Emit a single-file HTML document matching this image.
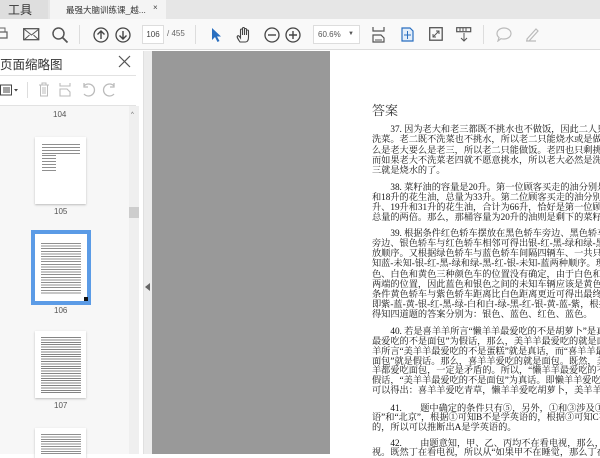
<!DOCTYPE html>
<html><head><meta charset="utf-8"><style>
*{margin:0;padding:0;box-sizing:border-box}
body{width:600px;height:454px;overflow:hidden;position:relative;background:#fff;font-family:"Liberation Sans","Noto Sans CJK SC",sans-serif}
.abs{position:absolute}
.tabbar{left:0;top:0;width:600px;height:19px;background:#e6e6e6}
.tb{left:0;top:19px;width:600px;height:31px;background:#f9f9f9;border-bottom:1px solid #dcdcdc}
.ln{position:absolute;left:372px;white-space:nowrap;font-family:"Liberation Serif","Noto Serif CJK SC",serif;font-size:9.2px;line-height:10px;color:#111}
svg{position:absolute}
</style></head><body>
<div class="abs tabbar"></div>
<div class="abs" style="left:0;top:0;width:48px;height:19px;background:#dedede"></div>
<div class="abs" style="left:8px;top:1px;font-size:12px;color:#333">工具</div>
<div class="abs" style="left:50px;top:0;width:116px;height:19px;background:#f4f4f4"></div>
<div class="abs" style="left:66px;top:4px;font-size:8.5px;color:#333">最强大脑训练课_越...</div>
<div class="abs" style="left:153px;top:3px;font-size:8px;color:#444">×</div>
<div class="abs tb"></div>
<svg style="left:0;top:27px" width="10" height="16"><rect x="-4" y="5" width="11" height="6" fill="none" stroke="#666" stroke-width="1.3"/><rect x="-2" y="1" width="7" height="4" fill="none" stroke="#666"/></svg>
<svg style="left:23px;top:28px" width="17" height="13"><rect x=".7" y=".7" width="15" height="11" fill="none" stroke="#555" stroke-width="1.3"/><path d="M1 1l7.5 6 7.5-6M1 12l5.5-5M16 12l-5.5-5" fill="none" stroke="#555"/></svg>
<svg style="left:51px;top:26px" width="18" height="18"><circle cx="7.5" cy="7.5" r="5.5" fill="none" stroke="#555" stroke-width="1.5"/><path d="M11.5 11.5l5 5" stroke="#555" stroke-width="1.8"/></svg>
<div class="abs" style="left:79px;top:25px;width:1px;height:19px;background:#ddd"></div>
<svg style="left:93px;top:27px" width="16" height="16"><circle cx="8" cy="8" r="7" fill="none" stroke="#444" stroke-width="1.3"/><path d="M8 12V4M4.5 7.5L8 4l3.5 3.5" fill="none" stroke="#444" stroke-width="1.4"/></svg>
<svg style="left:115px;top:27px" width="16" height="16"><circle cx="8" cy="8" r="7" fill="none" stroke="#444" stroke-width="1.3"/><path d="M8 4v8M4.5 8.5L8 12l3.5-3.5" fill="none" stroke="#444" stroke-width="1.4"/></svg>
<div class="abs" style="left:142px;top:25px;width:22px;height:19px;background:#fff;border:1px solid #ddd;font-size:8px;color:#444;text-align:center;line-height:17px">106</div>
<div class="abs" style="left:167px;top:29px;font-size:8px;color:#666">/ 455</div>
<div class="abs" style="left:195px;top:25px;width:1px;height:19px;background:#ddd"></div>
<svg style="left:210px;top:27px" width="12" height="16"><path d="M2 1v12l3-3 2.5 5 2-1-2.5-4.5H11z" fill="#2a6fc0"/></svg>
<svg style="left:236px;top:26px" width="16" height="18"><path d="M4 16c-2-3-3.5-5-2.5-6s2 .5 3 2V4a1 1 0 0 1 2 0v5V2.5a1 1 0 0 1 2 0V9V3.5a1 1 0 0 1 2 0V9V5a1 1 0 0 1 2 0v6c0 3-1 5-3 5z" fill="none" stroke="#444" stroke-width="1.1"/></svg>
<svg style="left:264px;top:27px" width="16" height="16"><circle cx="8" cy="8" r="7" fill="none" stroke="#444" stroke-width="1.3"/><path d="M4 8h8" stroke="#444" stroke-width="1.4"/></svg>
<svg style="left:285px;top:27px" width="16" height="16"><circle cx="8" cy="8" r="7" fill="none" stroke="#444" stroke-width="1.3"/><path d="M4 8h8M8 4v8" stroke="#444" stroke-width="1.4"/></svg>
<div class="abs" style="left:313px;top:25px;width:47px;height:19px;background:#fff;border:1px solid #ddd;font-size:8px;color:#555;line-height:17px;padding-left:4px">60.6%<span style="position:absolute;right:5px;font-size:6px">▼</span></div>
<svg style="left:372px;top:26px" width="13" height="17"><path d="M1 1v4h11V1M1 16v-7h8l3 3v4z" fill="none" stroke="#555" stroke-width="1.2"/><path d="M3 14h7" stroke="#555"/></svg>
<svg style="left:401px;top:27px" width="13" height="15"><path d="M1 1h8l3 3v10H1z" fill="#e3eefa" stroke="#2a6fc0" stroke-width="1.2"/><path d="M6.5 4v8M3 8h7" stroke="#2a6fc0"/></svg>
<svg style="left:429px;top:27px" width="14" height="14"><rect x=".7" y=".7" width="12.5" height="12.5" fill="none" stroke="#555" stroke-width="1.3"/><path d="M4 10l6-6M7 4h3v3M4 7v3h3" fill="none" stroke="#555"/></svg>
<svg style="left:456px;top:27px" width="16" height="15"><rect x=".7" y=".7" width="14" height="4" fill="none" stroke="#555" stroke-width="1.2"/><path d="M4 1v3M7 1v3M10 1v3M8 6v8M5 11l3 3 3-3" fill="none" stroke="#555"/></svg>
<div class="abs" style="left:483px;top:25px;width:1px;height:19px;background:#ddd"></div>
<svg style="left:496px;top:27px" width="16" height="15"><path d="M8 1c4 0 7 2.5 7 5.5S12 12 8 12c-1 0-2 0-3-.3L2 14l1-3.5C1.7 9.5 1 8 1 6.5 1 3.5 4 1 8 1z" fill="none" stroke="#bbb" stroke-width="1.2"/></svg>
<svg style="left:524px;top:26px" width="16" height="16"><path d="M3 13l9-10 2 2-9 10H3zM2 15h10" fill="none" stroke="#bbb" stroke-width="1.2"/></svg>
<div class="abs" style="left:0;top:51px;width:143px;height:403px;background:#fff"></div>
<div class="abs" style="left:0;top:54px;font-size:12.5px;color:#333">页面缩略图</div>
<svg style="left:118px;top:55px" width="13" height="13"><path d="M1 1l11 11M12 1L1 12" stroke="#555" stroke-width="1.2"/></svg>
<div class="abs" style="left:0;top:75px;width:136px;height:1px;background:#e2e2e2"></div>
<svg style="left:0;top:84px" width="20" height="12"><rect x=".5" y="1" width="11" height="10" fill="none" stroke="#444"/><path d="M3 4h7M3 6h7M3 8h7" stroke="#444"/><path d="M14 5h4l-2 2.5z" fill="#444"/></svg>
<div class="abs" style="left:27px;top:82px;width:1px;height:16px;background:#ddd"></div>
<svg style="left:38px;top:82px" width="12" height="15"><path d="M1 3h10M4 3V1h4v2M2.5 3v11h7V3M5 5v7M7 5v7" fill="none" stroke="#bbb"/></svg>
<svg style="left:58px;top:82px" width="14" height="15"><path d="M2 1v3h10V1M2 14v-7h7l3 3v4z" fill="none" stroke="#bbb" stroke-width="1.1"/></svg>
<svg style="left:80px;top:82px" width="16" height="15"><path d="M4 12a6 6 0 1 0 0-8M4 1v4h4" fill="none" stroke="#bbb" stroke-width="1.3"/></svg>
<svg style="left:102px;top:82px" width="16" height="15"><path d="M12 12a6 6 0 1 1 0-8M12 1v4H8" fill="none" stroke="#bbb" stroke-width="1.3"/></svg>
<div class="abs" style="left:0;top:105px;width:136px;height:1px;background:#e2e2e2"></div>
<div class="abs" style="left:0;top:106px;width:129px;height:348px;background:#f7f7f7"></div>
<div class="abs" style="left:129px;top:106px;width:10px;height:348px;background:#efefef"></div>
<div class="abs" style="left:131px;top:112px;font-size:6px;color:#666">^</div>
<div class="abs" style="left:129px;top:207px;width:10px;height:11px;background:#cdcdcd"></div>
<div class="abs" style="left:53px;top:110px;font-size:8px;color:#555">104</div>
<div class="abs" style="left:35px;top:137px;width:51px;height:67px;background:#fff;box-shadow:0 1px 2px #bbb"></div>
<div class="abs" style="left:42px;top:144px;width:38px;height:11px;background:repeating-linear-gradient(#444 0 1px,transparent 1px 3px);opacity:.6"></div>
<div class="abs" style="left:42px;top:155px;width:14px;height:18px;background:repeating-linear-gradient(#444 0 1px,transparent 1px 3px);opacity:.6"></div>
<div class="abs" style="left:54px;top:207px;font-size:8px;color:#555">105</div>
<div class="abs" style="left:31px;top:230px;width:60px;height:75px;background:#5b9be6"></div>
<div class="abs" style="left:35px;top:234px;width:52px;height:67px;background:#fff"></div>
<div class="abs" style="left:41px;top:243px;width:40px;height:52px;background:repeating-linear-gradient(#333 0 1px,transparent 1px 2.6px);opacity:.55"></div>
<div class="abs" style="left:84px;top:297px;width:4px;height:4px;background:#111"></div>
<div class="abs" style="left:54px;top:306px;font-size:8px;color:#555">106</div>
<div class="abs" style="left:35px;top:331px;width:51px;height:67px;background:#fff;box-shadow:0 1px 2px #bbb"></div>
<div class="abs" style="left:41px;top:337px;width:40px;height:56px;background:repeating-linear-gradient(#333 0 1px,transparent 1px 2.4px);opacity:.6"></div>
<div class="abs" style="left:54px;top:401px;font-size:8px;color:#555">107</div>
<div class="abs" style="left:35px;top:428px;width:51px;height:30px;background:#fff;box-shadow:0 1px 2px #bbb"></div>
<div class="abs" style="left:41px;top:434px;width:40px;height:20px;background:repeating-linear-gradient(#333 0 1px,transparent 1px 2.4px);opacity:.55"></div>
<div class="abs" style="left:143px;top:51px;width:9px;height:403px;background:#ececec;border-left:1px solid #e0e0e0"></div>
<svg style="left:145px;top:283px" width="6" height="8"><path d="M5 0v8L0 4z" fill="#666"/></svg>
<div class="abs" style="left:152px;top:51px;width:178px;height:403px;background:#999"></div>
<div class="abs" style="left:372px;top:100px;font-family:'Liberation Serif','Noto Serif CJK SC',serif;font-size:13px;color:#333">答案</div>
<div class="ln" style="top:124px">　　37. 因为老大和老三都既不挑水也不做饭，因此二人只能</div>
<div class="ln" style="top:134px">洗菜。老二既不洗菜也不挑水，所以老二只能烧水或是做饭。</div>
<div class="ln" style="top:145px">么是老大要么是老三，所以老二只能做饭。老四也只剩挑水</div>
<div class="ln" style="top:155px">而如果老大不洗菜老四就不愿意挑水，所以老大必然是洗菜</div>
<div class="ln" style="top:165px">三就是烧水的了。</div>
<div class="ln" style="top:182px">　　38. 菜籽油的容量是20升。第一位顾客买走的油分别是</div>
<div class="ln" style="top:192px">和18升的花生油，总量为33升。第二位顾客买走的油分别是</div>
<div class="ln" style="top:202px">升、19升和31升的花生油，合计为66升，恰好是第一位顾客</div>
<div class="ln" style="top:212px">总量的两倍。那么，那桶容量为20升的油则是剩下的菜籽油</div>
<div class="ln" style="top:228px">　　39. 根据条件红色轿车摆放在黑色轿车旁边、黑色轿车</div>
<div class="ln" style="top:238px">旁边、银色轿车与红色轿车相邻可得出银-红-黑-绿和绿-黑</div>
<div class="ln" style="top:248px">放顺序。又根据绿色轿车与蓝色轿车间隔四辆车、一共只有</div>
<div class="ln" style="top:258px">知蓝-未知-银-红-黑-绿和绿-黑-红-银-未知-蓝两种顺序。現</div>
<div class="ln" style="top:269px">色、白色和黄色三种颜色车的位置没有确定，由于白色和黄</div>
<div class="ln" style="top:279px">两端的位置，因此蓝色和银色之间的未知车辆应该是黄色的</div>
<div class="ln" style="top:289px">条件黄色轿车与紫色轿车距离比白色距离更近可得出最终的</div>
<div class="ln" style="top:299px">即紫-蓝-黄-银-红-黑-绿-白和白-绿-黑-红-银-黄-蓝-紫，根据</div>
<div class="ln" style="top:309px">得知四道题的答案分别为：银色、蓝色、红色、蓝色。</div>
<div class="ln" style="top:326px">　　40. 若是喜羊羊所言“懒羊羊最爱吃的不是胡萝卜”是真</div>
<div class="ln" style="top:336px">最爱吃的不是面包”为假话，那么，美羊羊最爱吃的就是面包</div>
<div class="ln" style="top:346px">羊所言“美羊羊最爱吃的不是蛋糕”就是真话，而“喜羊羊最爱</div>
<div class="ln" style="top:356px">面包”就是假话。那么，喜羊羊爱吃的就是面包。既然，美羊</div>
<div class="ln" style="top:365px">羊都爱吃面包，一定是矛盾的。所以，“懒羊羊最爱吃的不是</div>
<div class="ln" style="top:375px">假话，“美羊羊最爱吃的不是面包”为真话。即懒羊羊爱吃胡</div>
<div class="ln" style="top:385px">可以得出：喜羊羊爱吃青草，懒羊羊爱吃胡萝卜，美羊羊爱</div>
<div class="ln" style="top:403px">　　41.　　题中确定的条件只有⑤，另外，①和③涉及①</div>
<div class="ln" style="top:412px">语”和“北京”，根据①可知B不是学英语的，根据③可知C不是</div>
<div class="ln" style="top:422px">的，所以可以推断出A是学英语的。</div>
<div class="ln" style="top:438px">　　42.　　由题意知，甲、乙、丙均不在看电视，那么，</div>
<div class="ln" style="top:447px">视。既然丁在看电视，所以从“如果甲不在睡觉，那么丁在看</div>
</body></html>
